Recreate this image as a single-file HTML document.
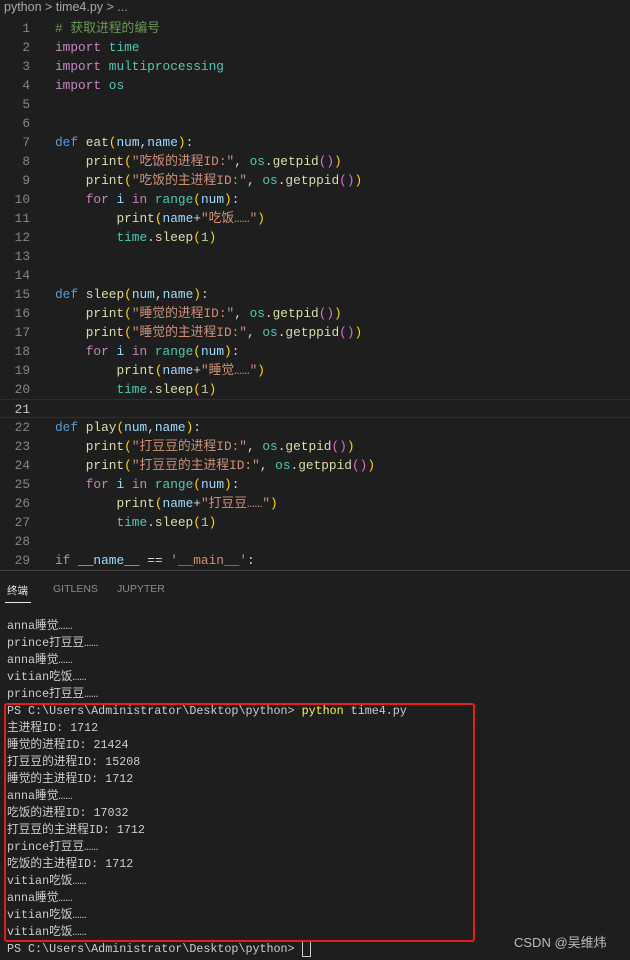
<!DOCTYPE html>
<html><head><meta charset="utf-8"><style>
body{margin:0;width:630px;height:959px;background:#1e1e1e;overflow:hidden;position:relative;font-family:"Liberation Mono","Noto Sans CJK SC",monospace}
.bc{position:absolute;left:4px;top:0;height:17px;line-height:17px;font:12.5px "Liberation Sans","Noto Sans CJK SC",sans-serif;color:#a9a9a9}
.code{position:absolute;left:0;top:19px;width:630px}
.l{position:relative;height:19px;line-height:19px;font-size:12.8px;white-space:pre;color:#d4d4d4}
.n{position:absolute;right:600px;width:30px;text-align:right;color:#858585}
.t{position:absolute;left:55px}
.cur{border-top:1px solid #2e2e2e;border-bottom:1px solid #2e2e2e;box-sizing:border-box}
.k{color:#c586c0}.m{color:#4ec9b0}.d{color:#569cd6}.f{color:#dcdcaa}.p{color:#9cdcfe}.s{color:#ce9178}.c{color:#6a9955}.y{color:#ffd700}.q{color:#da70d6}.nu{color:#b5cea8}
.panel{position:absolute;left:0;top:570px;width:630px;height:389px;border-top:1px solid #444;background:#1e1e1e}
.tabs{position:absolute;top:12px;left:7px;font:10.5px "Liberation Sans","Noto Sans CJK SC",sans-serif;color:#8b8b8b}
.tabs span{position:absolute;white-space:nowrap}
.term{position:absolute;left:7px;top:47px;font-size:11.7px;color:#cccccc}
.term div{height:17px;line-height:17px;white-space:pre}
.box{position:absolute;left:4px;top:703px;width:467px;height:235px;border:2px solid #e81c1c;border-radius:3px}
.wm{position:absolute;left:514px;top:932px;font:13px "Liberation Sans","Noto Sans CJK SC",sans-serif;color:#bbb}
</style></head><body>
<div class="bc">python &gt; time4.py &gt; ...</div>
<div class="code">
<div class="l"><span class="n">1</span><span class="t c"># 获取进程的编号</span></div>
<div class="l"><span class="n">2</span><span class="t"><span class="k">import</span> <span class="m">time</span></span></div>
<div class="l"><span class="n">3</span><span class="t"><span class="k">import</span> <span class="m">multiprocessing</span></span></div>
<div class="l"><span class="n">4</span><span class="t"><span class="k">import</span> <span class="m">os</span></span></div>
<div class="l"><span class="n">5</span></div>
<div class="l"><span class="n">6</span></div>
<div class="l"><span class="n">7</span><span class="t"><span class="d">def</span> <span class="f">eat</span><span class="y">(</span><span class="p">num</span>,<span class="p">name</span><span class="y">)</span>:</span></div>
<div class="l"><span class="n">8</span><span class="t">    <span class="f">print</span><span class="y">(</span><span class="s">"吃饭的进程ID:"</span>, <span class="m">os</span>.<span class="f">getpid</span><span class="q">()</span><span class="y">)</span></span></div>
<div class="l"><span class="n">9</span><span class="t">    <span class="f">print</span><span class="y">(</span><span class="s">"吃饭的主进程ID:"</span>, <span class="m">os</span>.<span class="f">getppid</span><span class="q">()</span><span class="y">)</span></span></div>
<div class="l"><span class="n">10</span><span class="t">    <span class="k">for</span> <span class="p">i</span> <span class="k">in</span> <span class="m">range</span><span class="y">(</span><span class="p">num</span><span class="y">)</span>:</span></div>
<div class="l"><span class="n">11</span><span class="t">        <span class="f">print</span><span class="y">(</span><span class="p">name</span>+<span class="s">"吃饭……"</span><span class="y">)</span></span></div>
<div class="l"><span class="n">12</span><span class="t">        <span class="m">time</span>.<span class="f">sleep</span><span class="y">(</span><span class="nu">1</span><span class="y">)</span></span></div>
<div class="l"><span class="n">13</span></div>
<div class="l"><span class="n">14</span></div>
<div class="l"><span class="n">15</span><span class="t"><span class="d">def</span> <span class="f">sleep</span><span class="y">(</span><span class="p">num</span>,<span class="p">name</span><span class="y">)</span>:</span></div>
<div class="l"><span class="n">16</span><span class="t">    <span class="f">print</span><span class="y">(</span><span class="s">"睡觉的进程ID:"</span>, <span class="m">os</span>.<span class="f">getpid</span><span class="q">()</span><span class="y">)</span></span></div>
<div class="l"><span class="n">17</span><span class="t">    <span class="f">print</span><span class="y">(</span><span class="s">"睡觉的主进程ID:"</span>, <span class="m">os</span>.<span class="f">getppid</span><span class="q">()</span><span class="y">)</span></span></div>
<div class="l"><span class="n">18</span><span class="t">    <span class="k">for</span> <span class="p">i</span> <span class="k">in</span> <span class="m">range</span><span class="y">(</span><span class="p">num</span><span class="y">)</span>:</span></div>
<div class="l"><span class="n">19</span><span class="t">        <span class="f">print</span><span class="y">(</span><span class="p">name</span>+<span class="s">"睡觉……"</span><span class="y">)</span></span></div>
<div class="l"><span class="n">20</span><span class="t">        <span class="m">time</span>.<span class="f">sleep</span><span class="y">(</span><span class="nu">1</span><span class="y">)</span></span></div>
<div class="l cur"><span class="n" style="color:#c6c6c6">21</span></div>
<div class="l"><span class="n">22</span><span class="t"><span class="d">def</span> <span class="f">play</span><span class="y">(</span><span class="p">num</span>,<span class="p">name</span><span class="y">)</span>:</span></div>
<div class="l"><span class="n">23</span><span class="t">    <span class="f">print</span><span class="y">(</span><span class="s">"打豆豆的进程ID:"</span>, <span class="m">os</span>.<span class="f">getpid</span><span class="q">()</span><span class="y">)</span></span></div>
<div class="l"><span class="n">24</span><span class="t">    <span class="f">print</span><span class="y">(</span><span class="s">"打豆豆的主进程ID:"</span>, <span class="m">os</span>.<span class="f">getppid</span><span class="q">()</span><span class="y">)</span></span></div>
<div class="l"><span class="n">25</span><span class="t">    <span class="k">for</span> <span class="p">i</span> <span class="k">in</span> <span class="m">range</span><span class="y">(</span><span class="p">num</span><span class="y">)</span>:</span></div>
<div class="l"><span class="n">26</span><span class="t">        <span class="f">print</span><span class="y">(</span><span class="p">name</span>+<span class="s">"打豆豆……"</span><span class="y">)</span></span></div>
<div class="l"><span class="n">27</span><span class="t">        <span class="m">time</span>.<span class="f">sleep</span><span class="y">(</span><span class="nu">1</span><span class="y">)</span></span></div>
<div class="l"><span class="n">28</span></div>
<div class="l"><span class="n">29</span><span class="t"><span class="k">if</span> <span class="p">__name__</span> == <span class="s">'__main__'</span>:</span></div>
</div>
<div class="panel">
<div class="tabs"><span style="left:0;color:#e7e7e7">终端</span><span style="left:46px">GITLENS</span><span style="left:110px">JUPYTER</span></div>
<div style="position:absolute;left:5px;top:31px;width:26px;height:1px;background:#e7e7e7"></div>
<div class="term"><div>anna睡觉……</div><div>prince打豆豆……</div><div>anna睡觉……</div><div>vitian吃饭……</div><div>prince打豆豆……</div><div>PS C:\Users\Administrator\Desktop\python&gt; <span style="color:#f5f543">python</span> time4.py</div><div>主进程ID: 1712</div><div>睡觉的进程ID: 21424</div><div>打豆豆的进程ID: 15208</div><div>睡觉的主进程ID: 1712</div><div>anna睡觉……</div><div>吃饭的进程ID: 17032</div><div>打豆豆的主进程ID: 1712</div><div>prince打豆豆……</div><div>吃饭的主进程ID: 1712</div><div>vitian吃饭……</div><div>anna睡觉……</div><div>vitian吃饭……</div><div>vitian吃饭……</div><div>PS C:\Users\Administrator\Desktop\python&gt; <span style="display:inline-block;width:7px;height:14px;border:1px solid #ccc;vertical-align:middle"></span></div></div>
</div>
<div class="box"></div>
<div class="wm">CSDN @吴维炜</div>
</body></html>
